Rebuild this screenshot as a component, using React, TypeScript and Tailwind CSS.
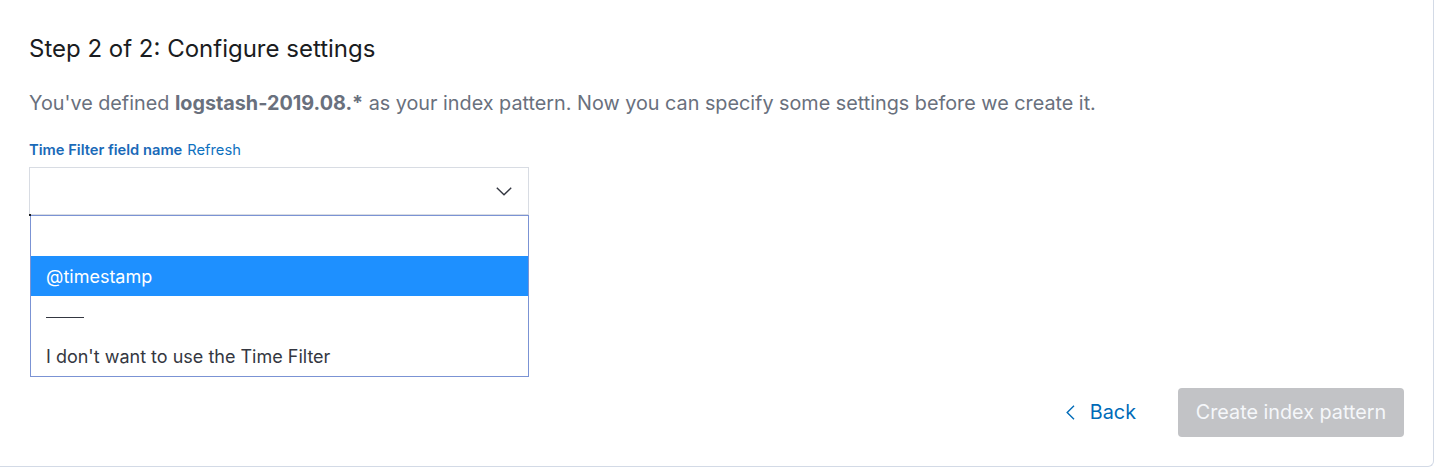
const App = () => {
  return (
    <div className="h-[468px] w-[1435px] bg-white font-['Inter','Liberation_Sans',sans-serif]">
      <div className="relative h-[467px] w-[1434px] rounded-br-md border-r border-b border-[#d3dae6] bg-white">
        <div className="pl-[29px] pt-[33px]">
          <h2 className="text-[24px] leading-[32px] text-[#1a1c21]">Step 2 of 2: Configure settings</h2>
          <p className="mt-[23px] text-[19.8px] leading-[30px] text-[#69707d]">
            You've defined <span className="font-bold">logstash-2019.08.*</span> as your index pattern. Now you can specify some settings before we create it.
          </p>

          <div className="mt-[22px] flex items-baseline gap-[5px] text-[14.7px] leading-[20px]">
            <span className="font-semibold text-[#1a6ab8]">Time Filter field name</span>
            <span className="text-[#0f72c0]">Refresh</span>
          </div>

          <div className="relative mt-[7px] w-[500px]">
            <div className="flex h-[48px] items-center justify-end border border-[#d8dce3] bg-white pr-[16px]">
              <svg width="16" height="9" viewBox="0 0 16 9" fill="none" className="mt-[1px]">
                <path d="M0.8 0.8 L8 7.8 L15.2 0.8" stroke="#343741" strokeWidth="1.4" />
              </svg>
            </div>
            <div className="absolute left-0 top-[47px] h-[2px] w-[2px] bg-[#1a1c21]" />
            <div className="ml-[1px] w-[499px] border border-[#7b93d4] bg-white text-[18px] text-[#343741]">
              <div className="h-[40px]" />
              <div className="flex h-[40px] items-center bg-[#1e90ff] px-[15px] text-white">@timestamp</div>
              <div className="flex h-[40px] items-center px-[15px]">
                <span className="mt-[2px] h-[1px] w-[38px] bg-[#343741]" />
              </div>
              <div className="flex h-[40px] items-center px-[15px]">I don't want to use the Time Filter</div>
            </div>
          </div>
        </div>

        <div className="absolute right-[29px] top-[388px] flex items-center">
          <button className="mr-[42px] flex items-center text-[19.8px] text-[#006bb8]">
            <svg width="9" height="15" viewBox="0 0 9 15" fill="none">
              <path d="M8 0.8 L1.2 7.5 L8 14.2" stroke="#006bb8" strokeWidth="1.4" />
            </svg>
            <span className="ml-[15px]">Back</span>
          </button>
          <button className="h-[49px] w-[226px] rounded-[4px] bg-[#c2c3c6] text-[19.8px] text-[#f5f7fa]">
            Create index pattern
          </button>
        </div>
      </div>
    </div>
  );
};

export default App;
